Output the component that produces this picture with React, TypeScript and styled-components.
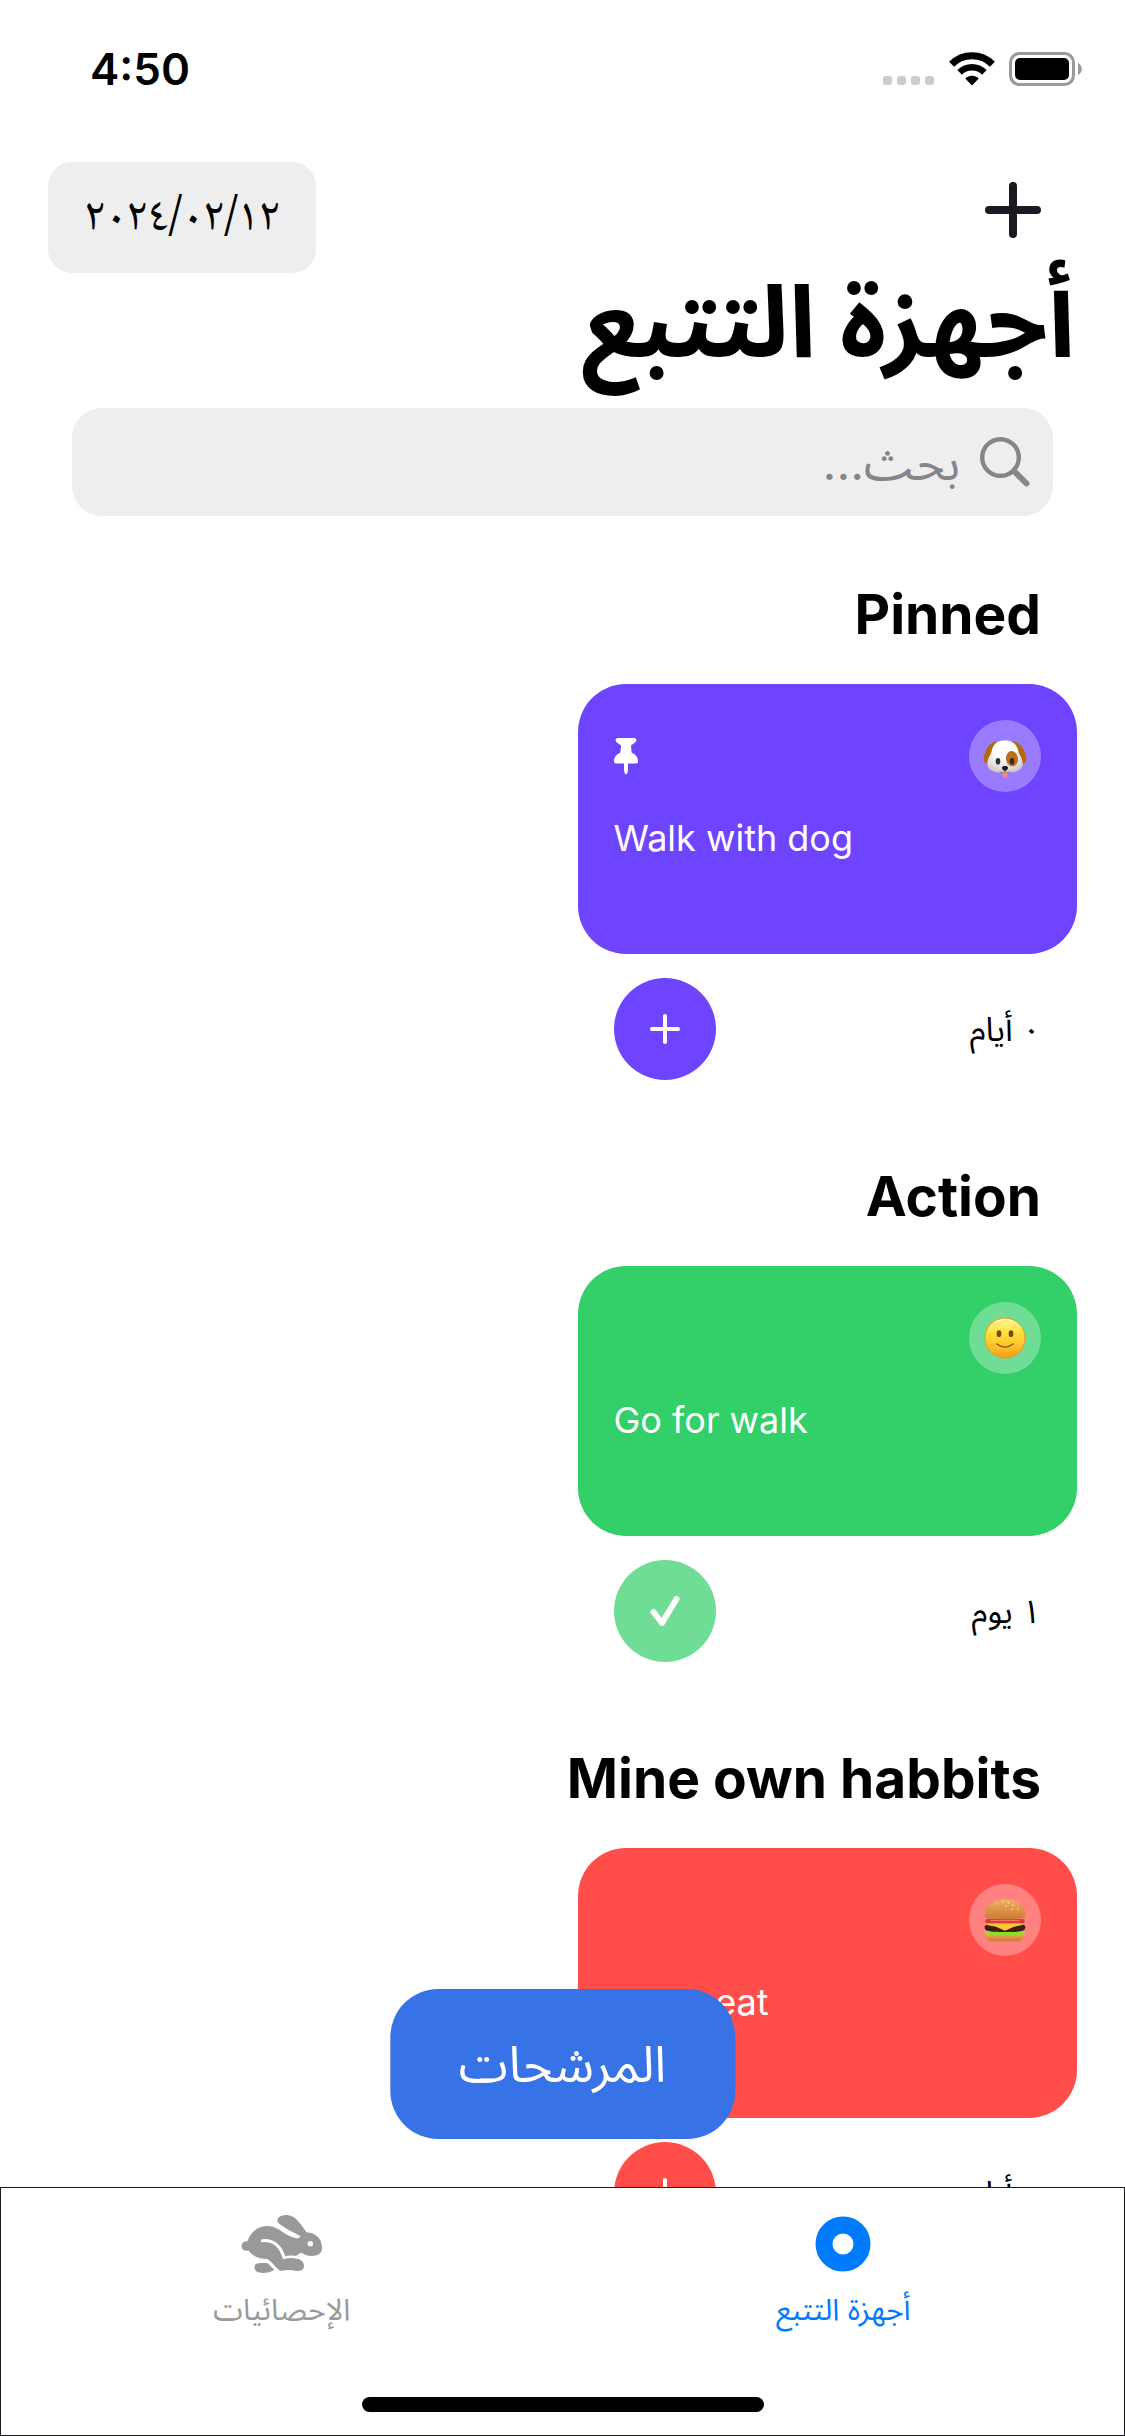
import React from "react";
import styled, { createGlobalStyle } from "styled-components";

const GlobalStyle = createGlobalStyle`
  *, *::before, *::after { box-sizing: border-box; }
  body {
    margin: 0;
    background: #ffffff;
    color: #000000;
    font-family: Inter, "Noto Sans Arabic", "DejaVu Sans", sans-serif;
  }
  button, input { font: inherit; color: inherit; border: 0; padding: 0; background: none; }
  h1, h2, p { margin: 0; }
  svg { display: block; flex: none; }
`;

const Screen = styled.div`
  display: flex;
  flex-direction: column;
  height: 100vh;
  overflow: hidden;
`;

const Content = styled.main`
  position: relative;
  flex: 1;
  min-height: 0;
  overflow: hidden;
`;

const StatusBar = styled.div`
  display: flex;
  align-items: center;
  justify-content: space-between;
  height: 138px;
  padding: 0 42px 0 90px;
  direction: ltr;
`;

const Clock = styled.time`
  font-size: 44px;
  line-height: 54px;
  font-weight: 600;
`;

const StatusIcons = styled.div`
  display: flex;
  align-items: center;
  gap: 14px;
`;

const Header = styled.header`
  display: flex;
  align-items: flex-start;
  justify-content: space-between;
  margin-top: 24px;
  padding: 0 48px;
`;

const AddButton = styled.button`
  display: flex;
  align-items: center;
  justify-content: center;
  width: 128px;
  height: 96px;
  color: #1a1b22;
`;

const DateButton = styled.button`
  min-width: 268px;
  height: 111px;
  padding: 4px 36px 0;
  border-radius: 24px;
  background: #eeeeee;
  font-family: "Noto Naskh Arabic", "Noto Sans Arabic", "DejaVu Sans", sans-serif;
  font-size: 47px;
  line-height: 60px;
`;

const Title = styled.h1`
  padding: 0 50px;
  font-size: 100px;
  line-height: 96px;
  font-weight: 700;
`;

const Search = styled.label`
  display: flex;
  align-items: center;
  gap: 20px;
  height: 108px;
  margin: 39px 72px 64px;
  padding: 0 23px;
  border-radius: 30px;
  background: #eeeeee;
  color: #85858a;
`;

const SearchInput = styled.input`
  flex: 1;
  min-width: 0;
  height: 84px;
  outline: 0;
  font-size: 48px;
  &::placeholder { color: #85858a; opacity: 1; }
`;

const Section = styled.section`
  padding: 0 48px 82px;
`;

const SectionTitle = styled.h2`
  padding: 0 36px;
  margin-bottom: 36px;
  font-size: 55px;
  line-height: 68px;
  font-weight: 700;
`;

const Grid = styled.div`
  display: grid;
  grid-template-columns: 1fr 1fr;
  gap: 30px;
`;

const Card = styled.div<{ $color: string }>`
  height: 270px;
  padding: 36px;
  border-radius: 48px;
  background: ${(p) => p.$color};
  color: #ffffff;
`;

const CardTop = styled.div`
  display: flex;
  align-items: center;
  justify-content: space-between;
  margin-bottom: 24px;
`;

const EmojiBadge = styled.span`
  display: flex;
  align-items: center;
  justify-content: center;
  width: 72px;
  height: 72px;
  border-radius: 50%;
  background: rgba(255, 255, 255, 0.3);
`;

const TrackerName = styled.p`
  direction: ltr;
  text-align: left;
  font-size: 36px;
  line-height: 44px;
`;

const CardFooter = styled.div`
  display: flex;
  align-items: center;
  justify-content: space-between;
  padding: 24px 36px 0;
  font-size: 33px;
  line-height: 44px;
`;

const RoundButton = styled.button<{ $color: string; $done?: boolean }>`
  display: flex;
  align-items: center;
  justify-content: center;
  width: 102px;
  height: 102px;
  border-radius: 50%;
  background: ${(p) => p.$color};
  color: #ffffff;
  opacity: ${(p) => (p.$done ? 0.7 : 1)};
`;

const FilterButton = styled.button`
  position: absolute;
  bottom: 48px;
  left: 50%;
  transform: translateX(-50%);
  height: 150px;
  padding: 0 69px;
  border-radius: 48px;
  background: #3772e7;
  color: #ffffff;
  font-size: 50px;
  line-height: 60px;
`;

const TabBar = styled.nav`
  display: flex;
  flex-direction: column;
  justify-content: space-between;
  align-items: center;
  height: 249px;
  padding: 23px 0;
  border: 1px solid #1a1b22;
  background: #ffffff;
`;

const Tabs = styled.div`
  display: flex;
  width: 100%;
`;

const Tab = styled.a<{ $active?: boolean }>`
  flex: 1;
  display: flex;
  flex-direction: column;
  align-items: center;
  gap: 14px;
  color: ${(p) => (p.$active ? "#007aff" : "#999999")};
  font-size: 30px;
  line-height: 36px;
  text-decoration: none;
`;

const TabIcon = styled.span`
  display: flex;
  align-items: center;
  height: 66px;
`;

const HomeIndicator = styled.div`
  width: 402px;
  height: 15px;
  border-radius: 8px;
  background: #000000;
`;

const SignalDots = () => (
  <svg width="52" height="34" viewBox="0 0 52 34" fill="#cccccc">
    {[0, 14, 28, 42].map((x) => (
      <rect key={x} x={x} y="24" width="9" height="9" rx="3" />
    ))}
  </svg>
);

const WifiIcon = () => (
  <svg width="46" height="34" viewBox="0 0 46 34" fill="none" stroke="#000000" strokeWidth="7">
    <path d="M2.6 12.2 C14 1 32 1 43.4 12.2" />
    <path d="M10.6 20.4 C17.5 13.6 28.5 13.6 35.4 20.4" strokeWidth="6.6" />
    <path d="M16.2 26.6 C20 22.8 26 22.8 29.8 26.6 L23 33.6 Z" fill="#000000" stroke="none" />
  </svg>
);

const BatteryIcon = () => (
  <svg width="74" height="34" viewBox="0 0 74 34">
    <rect x="1.5" y="1.5" width="63" height="31" rx="9" fill="none" stroke="#999999" strokeWidth="3" />
    <rect x="6" y="6" width="54" height="22" rx="5" fill="#000000" />
    <path d="M69 11 C74 13 74 21 69 23 Z" fill="#999999" />
  </svg>
);

const PlusIcon = ({ size, stroke }: { size: number; stroke: number }) => (
  <svg width={size} height={size} viewBox={`0 0 ${size} ${size}`} fill="none" stroke="currentColor" strokeWidth={stroke} strokeLinecap="round">
    <path d={`M${size / 2} ${stroke / 2}V${size - stroke / 2}M${stroke / 2} ${size / 2}H${size - stroke / 2}`} />
  </svg>
);

const CheckIcon = () => (
  <svg width="30" height="32" viewBox="0 0 30 32" fill="none" stroke="currentColor" strokeWidth="6" strokeLinecap="round" strokeLinejoin="round">
    <path d="M3.5 17 L12 28 L26.5 4" />
  </svg>
);

const SearchIcon = () => (
  <svg width="50" height="50" viewBox="0 0 50 50" fill="none" stroke="currentColor" strokeLinecap="round">
    <circle cx="20.5" cy="20.5" r="18.3" strokeWidth="4.4" />
    <path d="M34.5 34.5 L46.5 46.5" strokeWidth="6" />
  </svg>
);

const PinIcon = () => (
  <svg width="24" height="37" viewBox="0 0 24 37" fill="#ffffff">
    <path d="M4 0 H20 C23 0 23 3 21 4.5 C19.5 6 17.5 6.5 17 8 L17.6 14.5 C21 16 24 19 24 23 C24 25 23 25.5 21.5 25.5 H14 V31 C14 33.5 13 36.5 12 36.5 C11 36.5 10 33.5 10 31 V25.5 H2.5 C1 25.5 0 25 0 23 C0 19 3 16 6.4 14.5 L7 8 C6.5 6.5 4.5 6 3 4.5 C1 3 1 0 4 0 Z" />
  </svg>
);

const DogIcon = () => (
  <svg width="44" height="45" viewBox="75 73 132 135">
    <defs>
      <radialGradient id="dogFur" cx="0.48" cy="0.3" r="0.72">
        <stop offset="0.4" stopColor="#ffffff" />
        <stop offset="1" stopColor="#cfc9c4" />
      </radialGradient>
    </defs>
    <path d="M118 94 C98 96 80 118 77 145 C76 158 82 163 92 162 L116 110 Z" fill="#b06a0c" />
    <path d="M164 94 C184 96 202 118 205 145 C206 158 200 163 190 162 L166 110 Z" fill="#b06a0c" />
    <path d="M141 92 C163 92 177 104 181 124 C184 138 194 145 194 162 C194 184 170 189 141 189 C112 189 88 184 88 162 C88 145 98 138 101 124 C105 104 119 92 141 92 Z" fill="url(#dogFur)" />
    <ellipse cx="162" cy="147" rx="18" ry="23" fill="#b8701a" transform="rotate(-8 162 147)" />
    <ellipse cx="120" cy="155" rx="7" ry="10" fill="#2f3135" />
    <ellipse cx="162" cy="155" rx="7" ry="10" fill="#3a2a1c" />
    <path d="M133 189 H149 V197 C149 206 133 206 133 197 Z" fill="#ff8088" />
    <path d="M141 182 V187 M124 186 Q134 192 141 186 Q148 192 158 186" fill="none" stroke="#77706c" strokeWidth="2.5" />
    <path d="M132 173 C134 168 148 168 150 173 C151 178 145 184 141 184 C137 184 131 178 132 173 Z" fill="#1c1c1e" />
  </svg>
);

const SmileIcon = () => (
  <svg width="42" height="42" viewBox="78 84 126 126">
    <defs>
      <linearGradient id="smileFace" x1="0" y1="0" x2="0" y2="1">
        <stop offset="0" stopColor="#fff6a8" />
        <stop offset="0.35" stopColor="#ffe23a" />
        <stop offset="0.7" stopColor="#ffc22e" />
        <stop offset="1" stopColor="#f79a12" />
      </linearGradient>
    </defs>
    <circle cx="141" cy="147" r="60" fill="url(#smileFace)" stroke="#ee9a1a" strokeWidth="3" />
    <ellipse cx="123" cy="134" rx="7" ry="10" fill="#7a4508" />
    <ellipse cx="159" cy="134" rx="7" ry="10" fill="#7a4508" />
    <path d="M117 165 Q141 184 165 165" fill="none" stroke="#8a4e08" strokeWidth="4" strokeLinecap="round" />
  </svg>
);

const BurgerIcon = () => (
  <svg width="42" height="43" viewBox="78 73 126 129">
    <defs>
      <linearGradient id="burgerBun" x1="0" y1="0" x2="0" y2="1">
        <stop offset="0" stopColor="#f0b060" />
        <stop offset="1" stopColor="#cc7a34" />
      </linearGradient>
    </defs>
    <path d="M82 174 H198 V182 C198 196 188 200 172 200 H108 C92 200 82 196 82 182 Z" fill="url(#burgerBun)" />
    <path d="M80 170 C86 164 194 164 202 170 C206 178 196 178 192 176 C188 184 176 184 172 178 C164 186 152 184 148 178 C140 186 128 184 124 178 C116 184 104 184 100 177 C92 182 78 180 80 170 Z" fill="#8be02c" />
    <path d="M80 158 C80 148 92 148 141 148 C190 148 202 148 202 158 C202 170 190 172 141 172 C92 172 80 170 80 158 Z" fill="#3f1d12" />
    <path d="M84 146 H198 L190 152 L168 156 L141 168 L114 156 L90 152 Z" fill="#ffc832" />
    <rect x="82" y="133" width="118" height="13" rx="6" fill="#d93a30" />
    <path d="M98 138 H184" stroke="#f58070" strokeWidth="3" strokeLinecap="round" />
    <path d="M141 74 C178 74 202 96 202 122 C202 131 192 134 141 134 C90 134 80 131 80 122 C80 96 104 74 141 74 Z" fill="url(#burgerBun)" />
    <g fill="#ffe2a0">
      <circle cx="118" cy="88" r="2.5" />
      <circle cx="134" cy="82" r="2.5" />
      <circle cx="152" cy="84" r="2.5" />
      <circle cx="144" cy="94" r="2.5" />
      <circle cx="165" cy="92" r="2.5" />
      <circle cx="162" cy="104" r="2.5" />
      <circle cx="180" cy="103" r="2.5" />
    </g>
  </svg>
);

const RingIcon = () => (
  <svg width="56" height="56" viewBox="0 0 56 56" fill="none" stroke="currentColor">
    <circle cx="28" cy="28" r="19" strokeWidth="17" />
  </svg>
);

const RabbitIcon = () => (
  <svg width="82" height="60" viewBox="184 132 246 180">
    <g fill="currentColor">
      <circle cx="200" cy="228" r="14.5" />
      <path d="M203 215 C213 184 236 168 264 168 C300 168 318 204 358 205 L362 198 C338 186 316 176 296 159 C287 146 300 135 323 135 C350 137 366 168 381 187 C408 188 427 206 427 234 C427 250 416 258 396 258 C382 258 373 253 366 248 C359 250 356 254 349 258 L346 265 C362 267 373 275 373 288 C373 300 363 303 350 303 C334 299 322 300 305 303 C288 298 282 276 262 267 C240 266 222 262 206 241 Z" />
      <path d="M229 281 C240 278 252 279 264 280 L284 300 C266 311 240 311 230 304 C223 298 223 287 229 281 Z" />
    </g>
    <path d="M248 212 C276 208 302 224 313 263" fill="none" stroke="#ffffff" strokeWidth="9" strokeLinecap="round" />
    <path d="M311 263 Q330 258 356 262" fill="none" stroke="#ffffff" strokeWidth="8" />
    <circle cx="392" cy="221" r="8" fill="#ffffff" />
  </svg>
);

interface Tracker {
  section: string;
  name: string;
  color: string;
  icon: React.ReactNode;
  count: string;
  pinned?: boolean;
  done?: boolean;
}

const trackers: Tracker[] = [
  { section: "Pinned", name: "Walk with dog", color: "#6e44fe", icon: <DogIcon />, count: "٠ أيام", pinned: true },
  { section: "Action", name: "Go for walk", color: "#33cf69", icon: <SmileIcon />, count: "١ يوم", done: true },
  { section: "Mine own habbits", name: "Go to eat", color: "#ff4d49", icon: <BurgerIcon />, count: "٠ أيام" },
];

export default function App() {
  return (
    <Screen dir="rtl" lang="ar">
      <GlobalStyle />
      <Content>
        <StatusBar>
          <Clock>4:50</Clock>
          <StatusIcons>
            <SignalDots />
            <WifiIcon />
            <BatteryIcon />
          </StatusIcons>
        </StatusBar>
        <Header>
          <AddButton aria-label="إضافة">
            <PlusIcon size={56} stroke={8} />
          </AddButton>
          <DateButton dir="ltr">٢٠٢٤/٠٢/١٢</DateButton>
        </Header>
        <Title>أجهزة التتبع</Title>
        <Search>
          <SearchIcon />
          <SearchInput type="text" placeholder="بحث..." aria-label="بحث" />
        </Search>
        {trackers.map((t) => (
          <Section key={t.section}>
            <SectionTitle>{t.section}</SectionTitle>
            <Grid>
              <article>
                <Card $color={t.color}>
                  <CardTop>
                    <EmojiBadge>{t.icon}</EmojiBadge>
                    {t.pinned && <PinIcon />}
                  </CardTop>
                  <TrackerName>{t.name}</TrackerName>
                </Card>
                <CardFooter>
                  <span>{t.count}</span>
                  <RoundButton $color={t.color} $done={t.done} aria-label={t.name}>
                    {t.done ? <CheckIcon /> : <PlusIcon size={30} stroke={4} />}
                  </RoundButton>
                </CardFooter>
              </article>
            </Grid>
          </Section>
        ))}
        <FilterButton>المرشحات</FilterButton>
      </Content>
      <TabBar>
        <Tabs>
          <Tab href="#trackers" $active>
            <TabIcon><RingIcon /></TabIcon>
            أجهزة التتبع
          </Tab>
          <Tab href="#statistics">
            <TabIcon><RabbitIcon /></TabIcon>
            الإحصائيات
          </Tab>
        </Tabs>
        <HomeIndicator />
      </TabBar>
    </Screen>
  );
}
